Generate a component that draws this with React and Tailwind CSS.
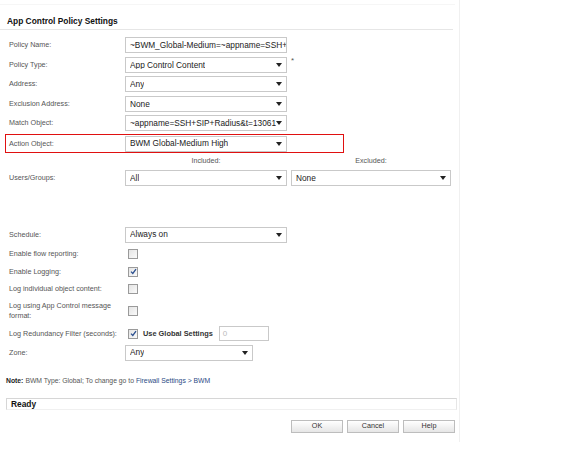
import React from 'react';

const label = "text-[7.2px] text-[#555555] leading-[10px]";

function Arrow() {
  return (
    <svg width="6" height="4" viewBox="0 0 6 4" className="shrink-0">
      <path d="M0 0 L6 0 L3 4 Z" fill="#222" />
    </svg>
  );
}

function Select({ value, w = 'w-[162px]' }) {
  return (
    <div className={`${w} h-[16px] border border-[#c9c9c9] bg-white flex items-center pl-[4px] pr-[4px] justify-between overflow-hidden`}>
      <span className="text-[8.3px] text-[#222] whitespace-nowrap overflow-hidden leading-none">{value}</span>
      <Arrow />
    </div>
  );
}

function Check({ checked }) {
  return (
    <div className="w-[10px] h-[10px] border border-[#9a9a9a] bg-gradient-to-br from-[#e4e4e4] to-[#fafafa] flex items-center justify-center">
      {checked && (
        <svg width="7" height="7" viewBox="0 0 7 7">
          <path d="M1 3.6 L2.8 5.4 L6 1.2" stroke="#2a4f8f" strokeWidth="1.3" fill="none" />
        </svg>
      )}
    </div>
  );
}

function Row({ name, h = 'h-[19.5px]', children }) {
  return (
    <div className={`flex items-center ${h}`}>
      <div className={`w-[116px] ${label}`}>{name}</div>
      <div className="flex items-center">{children}</div>
    </div>
  );
}

function Btn({ children }) {
  return (
    <div className="w-[52px] h-[13px] border border-[#bdbdbd] bg-gradient-to-b from-white to-[#e6e6e6] flex items-center justify-center text-[7.2px] text-[#333]">
      {children}
    </div>
  );
}

export default function App() {
  return (
    <div className="w-[573px] h-[449px] bg-white" style={{ fontFamily: '"Liberation Sans", Arial, sans-serif' }}>
      <div className="w-[460px] h-[442px] border-r border-[#f0f0f0] pt-[4px]">
        <div className="border-t border-[#f6f6f6] mr-[4px]">
          <div className="pl-[7px] pt-[10px] pb-[1px] text-[8.4px] font-bold text-[#111] border-b border-[#e6e6e6] mr-[2px]">
            App Control Policy Settings
          </div>
        </div>

        <div className="pl-[9px] pt-[6px]">
          <Row name="Policy Name:">
            <div className="w-[162px] h-[16px] border border-[#c9c9c9] bg-white flex items-center pl-[4px] overflow-hidden">
              <span className="text-[8.3px] text-[#222] whitespace-nowrap leading-none">~BWM_Global-Medium=~appname=SSH+SIP</span>
            </div>
          </Row>
          <Row name="Policy Type:">
            <Select value="App Control Content" />
            <span className="ml-[4px] -mt-[8px] text-[8px] text-[#555]">*</span>
          </Row>
          <Row name="Address:">
            <Select value="Any" />
          </Row>
          <Row name="Exclusion Address:">
            <Select value="None" />
          </Row>
          <Row name="Match Object:">
            <Select value="~appname=SSH+SIP+Radius&t=1306159" />
          </Row>
        </div>

        <div className="ml-[5px] w-[339px] h-[19px] bg-[#e01010] p-px mt-px">
          <div className="w-full h-full bg-white flex items-center pl-[3px]">
            <div className={`w-[116px] ${label}`}>Action Object:</div>
            <Select value="BWM Global-Medium High" />
          </div>
        </div>

        <div className="flex h-[16px] items-center text-[7.2px] text-[#555]">
          <div className="w-[125px]" />
          <div className="w-[162px] text-center">Included:</div>
          <div className="w-[4px]" />
          <div className="w-[160px] text-center">Excluded:</div>
        </div>

        <div className="pl-[9px]">
          <Row name="Users/Groups:" h="h-[18px]">
            <Select value="All" />
            <div className="w-[4px]" />
            <Select value="None" w="w-[160px]" />
          </Row>

          <div className="h-[38px]" />

          <Row name="Schedule:" h="h-[19px]">
            <Select value="Always on" />
          </Row>
          <Row name="Enable flow reporting:" h="h-[19px]">
            <div className="pl-[3px]"><Check /></div>
          </Row>
          <Row name="Enable Logging:" h="h-[17.5px]">
            <div className="pl-[3px]"><Check checked /></div>
          </Row>
          <Row name="Log individual object content:" h="h-[17.5px]">
            <div className="pl-[3px]"><Check /></div>
          </Row>
          <div className="flex items-center h-[26px]">
            <div className={`w-[112px] ${label} mr-[4px]`}>Log using App Control message format:</div>
            <div className="pl-[3px]"><Check /></div>
          </div>
          <Row name="Log Redundancy Filter (seconds):" h="h-[19px]">
            <div className="pl-[3px]"><Check checked /></div>
            <span className="ml-[5px] text-[7.4px] font-bold text-[#333]">Use Global Settings</span>
            <div className="ml-[6px] w-[50px] h-[15px] border border-[#c9c9c9] flex items-center pl-[3px] text-[8px] text-[#bbb]">0</div>
          </Row>
          <Row name="Zone:" h="h-[19px]">
            <Select value="Any" w="w-[128px]" />
          </Row>
        </div>

        <div className="pl-[6px] mt-[13px] text-[6.8px] text-[#555] h-[12px] flex items-center">
          <span className="font-bold text-[#222] mr-[2px]">Note:</span>
          <span>BWM Type: Global; To change go to</span>
          <span className="ml-[2px] text-[#2b4a84]">Firewall Settings &gt; BWM</span>
        </div>

        <div className="ml-[6px] mr-[2px] mt-[11px] h-[12px] border border-[#d6d6d6] border-b-[#f0f0f0] border-r-[#e6e6e6] flex items-center pl-[4px] text-[8.4px] font-bold text-[#111]">
          Ready
        </div>

        <div className="flex justify-end gap-[4px] mr-[4px] mt-[10px]">
          <Btn>OK</Btn>
          <Btn>Cancel</Btn>
          <Btn>Help</Btn>
        </div>
      </div>
    </div>
  );
}
